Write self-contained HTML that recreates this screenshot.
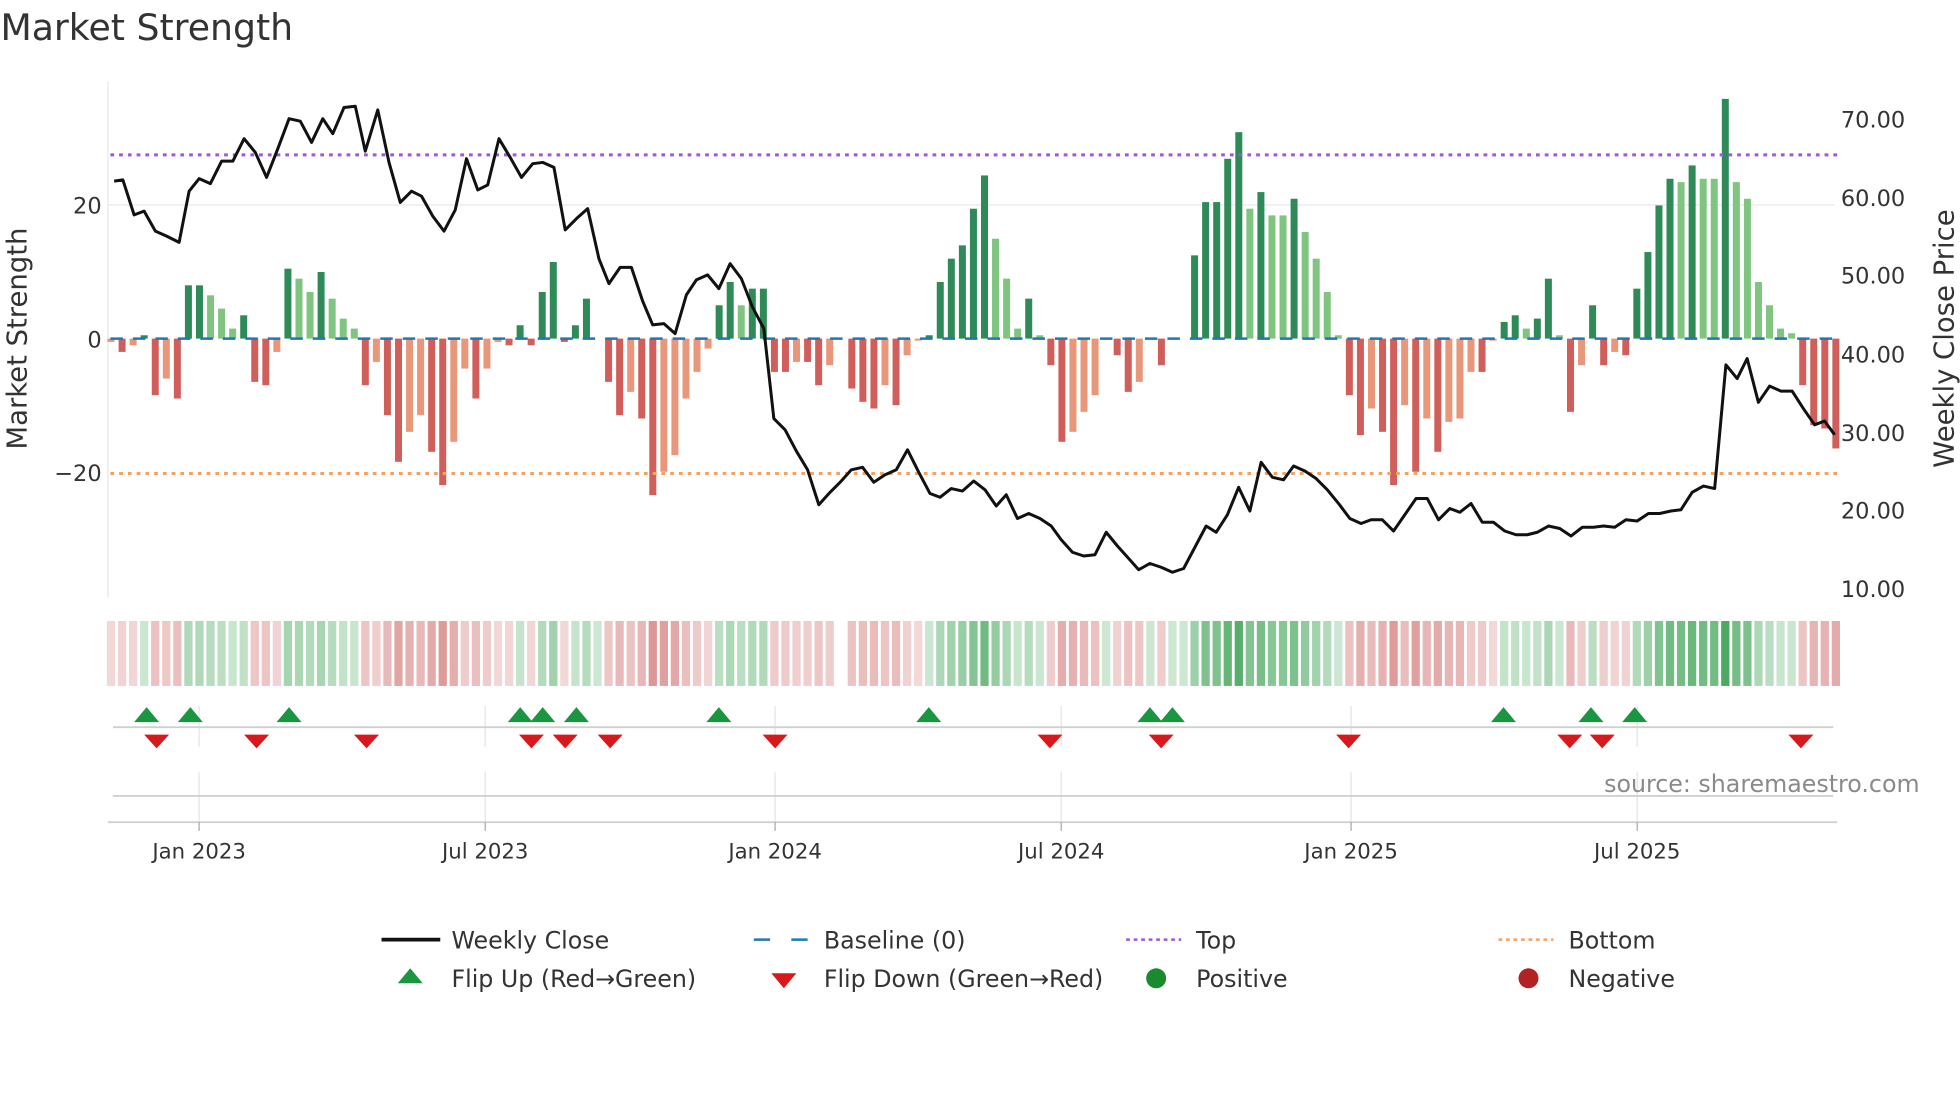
<!DOCTYPE html>
<html><head><meta charset="utf-8"><style>
html,body{margin:0;padding:0;background:#fff;width:1960px;height:1102px;overflow:hidden}
svg{display:block}
text{font-family:"DejaVu Sans","Liberation Sans",sans-serif;fill:#333}
</style></head><body>
<svg id="s" width="1960" height="1102" viewBox="0 0 1568 882" xmlns="http://www.w3.org/2000/svg">
<text x="0" y="32" font-size="29">Market Strength</text>
<line x1="86" y1="65" x2="86" y2="478" stroke="#e8e8e8" stroke-width="1"/>
<line x1="86" y1="164" x2="1468" y2="164" stroke="#eef0f4" stroke-width="1.5"/>
<g id="bars"></g>
<line x1="88" y1="271" x2="1470" y2="271" stroke="#1f77b4" stroke-width="2" stroke-dasharray="10,8"/>
<line x1="88" y1="124" x2="1470" y2="124" stroke="#9b59d6" stroke-width="2.4" stroke-dasharray="3,4"/>
<line x1="88" y1="379" x2="1470" y2="379" stroke="#f4a261" stroke-width="2.4" stroke-dasharray="3,4"/>
<polyline id="price" fill="none" stroke="#111" stroke-width="2.4" stroke-linejoin="round"/>
<g font-size="18" text-anchor="end">
<text x="81" y="171">20</text><text x="81" y="278">0</text><text x="81" y="385">−20</text>
</g>
<g font-size="18">
<text x="1473" y="102">70.00</text><text x="1473" y="165">60.00</text><text x="1473" y="227">50.00</text>
<text x="1473" y="290">40.00</text><text x="1473" y="353">30.00</text><text x="1473" y="415">20.00</text><text x="1473" y="478">10.00</text>
</g>
<text transform="translate(21,271) rotate(-90)" font-size="22" text-anchor="middle">Market Strength</text>
<text transform="translate(1563,271) rotate(-90)" font-size="22" text-anchor="middle">Weekly Close Price</text>
<g id="strip"></g>
<g stroke="#e4e4e4" stroke-width="1">
<line x1="159" y1="565" x2="159" y2="598"/><line x1="388" y1="565" x2="388" y2="598"/><line x1="620" y1="565" x2="620" y2="598"/><line x1="849" y1="565" x2="849" y2="598"/><line x1="1081" y1="565" x2="1081" y2="598"/><line x1="1310" y1="565" x2="1310" y2="598"/>
<line x1="159" y1="618" x2="159" y2="660"/><line x1="388" y1="618" x2="388" y2="660"/><line x1="620" y1="618" x2="620" y2="660"/><line x1="849" y1="618" x2="849" y2="660"/><line x1="1081" y1="618" x2="1081" y2="660"/><line x1="1310" y1="618" x2="1310" y2="660"/>
</g>
<line x1="90" y1="582" x2="1467" y2="582" stroke="#d0d0d0" stroke-width="1.5"/>
<line x1="90" y1="637" x2="1467" y2="637" stroke="#d0d0d0" stroke-width="1.5"/>
<line x1="86" y1="658" x2="1470" y2="658" stroke="#d0d0d0" stroke-width="1.5"/>
<g stroke="#aaa" stroke-width="1">
<line x1="159" y1="658" x2="159" y2="665"/><line x1="388" y1="658" x2="388" y2="665"/><line x1="620" y1="658" x2="620" y2="665"/><line x1="849" y1="658" x2="849" y2="665"/><line x1="1081" y1="658" x2="1081" y2="665"/><line x1="1310" y1="658" x2="1310" y2="665"/>
</g>
<g id="marks"></g>
<g font-size="17" text-anchor="middle">
<text x="159" y="687">Jan 2023</text><text x="388" y="687">Jul 2023</text><text x="620" y="687">Jan 2024</text>
<text x="849" y="687">Jul 2024</text><text x="1081" y="687">Jan 2025</text><text x="1310" y="687">Jul 2025</text>
</g>
<text x="1536" y="634" font-size="19" text-anchor="end" style="fill:#8a8a8a">source: sharemaestro.com</text>
<g font-size="19">
<line x1="305" y1="752" x2="352" y2="752" stroke="#111" stroke-width="3"/>
<text x="361" y="759">Weekly Close</text>
<line x1="603" y1="752" x2="646" y2="752" stroke="#1f77b4" stroke-width="2" stroke-dasharray="13,17"/>
<text x="659" y="759">Baseline (0)</text>
<line x1="901" y1="752" x2="945" y2="752" stroke="#9b59d6" stroke-width="2" stroke-dasharray="3,3"/>
<text x="957" y="759">Top</text>
<line x1="1199" y1="752" x2="1243" y2="752" stroke="#f4a261" stroke-width="2" stroke-dasharray="3,3"/>
<text x="1255" y="759">Bottom</text>
<polygon points="328,775 338,787 318,787" fill="#1a9641"/>
<text x="361" y="790">Flip Up (Red→Green)</text>
<polygon points="617,779 637,779 627,791" fill="#d7191c"/>
<text x="659" y="790">Flip Down (Green→Red)</text>
<circle cx="925" cy="783" r="8" fill="#1a8a2e"/>
<text x="957" y="790">Positive</text>
<circle cx="1223" cy="783" r="8" fill="#b22222"/>
<text x="1255" y="790">Negative</text>
</g>
</svg>
<script>
var V="-0.5l,-2R,-1l,0.5G,-8.5R,-6l,-9R,8G,8G,6.5g,4.5g,1.5g,3.5G,-6.5R,-7R,-2l,10.5G,9g,7g,10G,6g,3g,1.5g,-7R,-3.5l,-11.5R,-18.5R,-14l,-11.5l,-17R,-22R,-15.5l,-4.5l,-9R,-4.5l,-0.5l,-1R,2G,-1R,7G,11.5G,-0.5R,2G,6G,0G,-6.5R,-11.5R,-8l,-12R,-23.5R,-20l,-17.5l,-9l,-5l,-1.5l,5G,8.5G,5g,7.5G,7.5G,-5R,-5R,-3.5l,-3.5R,-7R,-4l,0N,-7.5R,-9.5R,-10.5R,-7l,-10R,-2.5l,-0.3l,0.5G,8.5G,12G,14G,19.5G,24.5G,15g,9g,1.5g,6G,0.5g,-4R,-15.5R,-14l,-11l,-8.5l,0G,-2.5R,-8R,-6.5l,0G,-4R,0G,0G,12.5G,20.5G,20.5G,27G,31G,19.5g,22G,18.5g,18.5g,21G,16g,12g,7g,0.5g,-8.5R,-14.5R,-10.5l,-14R,-22R,-10l,-20R,-12l,-17R,-12.5l,-12l,-5l,-5R,-0.3l,2.5G,3.5G,1.5g,3G,9G,0.5g,-11R,-4l,5G,-4R,-2l,-2.5R,7.5G,13G,20G,24G,23.5g,26G,24g,24g,36G,23.5g,21g,8.5g,5g,1.5g,0.8g,-7R,-13R,-13.5R,-16.5R".split(",");
var C={G:"#2e8b57",g:"#7fc47f",R:"#d05f5c",l:"#e8977a",N:"#fff"};
var ns="http://www.w3.org/2000/svg",b=document.getElementById("bars"),st=document.getElementById("strip");
var step=(1469-88.5)/156;
function el(t,a,p){var e=document.createElementNS(ns,t);for(var k in a)e.setAttribute(k,a[k]);p.appendChild(e);return e;}
V.forEach(function(s,i){var v=parseFloat(s),t=s.slice(-1),x=88.5+i*step;
 var y=271-v*5.33;
 if(Math.abs(v)>0.05)el("rect",{x:x-2.8,y:Math.min(y,271),width:5.6,height:Math.abs(v*5.33),fill:C[t]},b);
 if(t!="N"){var a=Math.min(Math.abs(v)/34,1);
  var f=v>=0?"rgba(56,160,80,"+(0.25+0.65*a)+")":"rgba(200,80,80,"+(0.22+0.55*a)+")";
  el("rect",{x:x-3.3,y:497,width:6.6,height:52,fill:f},st);}
});
var P=[91,145,98,144,107,172,115,169,124,185,133,189,143,194,151,153,159,143,168,147,177,129,186,129,195,111,204,122,213,142,222,119,231,95,240,97,249,114,258,95,266,107,275,86,284,85,292,121,302,88,311,130,320,162,329,153,337,157,346,173,355,185,364,168,373,127,382,152,390,148,399,111,408,126,417,142,426,131,434,130,443,134,452,184,461,175,470,167,479,207,487,227,496,214,505,214,514,241,522,260,531,259,540,267,549,236,557,224,566,220,575,231,584,211,593,223,602,246,611,263,619,335,628,344,637,361,646,376,655,404,664,394,673,385,681,376,690,374,699,386,708,380,717,376,726,360,735,378,744,395,752,398,761,391,770,393,779,385,788,392,797,405,805,396,814,415,823,411,832,415,841,421,849,432,858,442,867,445,876,444,885,426,894,437,903,447,911,456,920,451,929,454,938,458,947,455,956,438,965,421,973,426,982,412,991,390,1000,409,1009,370,1018,382,1027,384,1035,373,1044,377,1053,383,1062,392,1071,403,1080,415,1089,419,1097,416,1106,416,1115,425,1124,412,1133,399,1142,399,1151,416,1160,407,1168,410,1177,403,1186,418,1195,418,1204,425,1213,428,1222,428,1230,426,1239,421,1248,423,1257,429,1266,422,1275,422,1283,421,1292,422,1301,416,1310,417,1319,411,1328,411,1337,409,1345,408,1354,394,1363,389,1372,391,1381,292,1390,303,1398,287,1407,322,1416,309,1425,313,1434,313,1443,327,1452,340,1460,337,1468,348];
var pts=[];for(var i=0;i<P.length;i+=2)pts.push(P[i]+","+P[i+1]);
document.getElementById("price").setAttribute("points",pts.join(" "));
var m=document.getElementById("marks");
[117,152,231,416,434,461,575,743,920,938,1203,1273,1308].forEach(function(x){el("polygon",{points:x+",566 "+(x+10)+",578 "+(x-10)+",578",fill:"#1a9641"},m);});
[125,205,293,425,452,488,620,840,929,1079,1256,1282,1441].forEach(function(x){el("polygon",{points:(x-10)+",588 "+(x+10)+",588 "+x+",599",fill:"#d7191c"},m);});
</script>
</body></html>
